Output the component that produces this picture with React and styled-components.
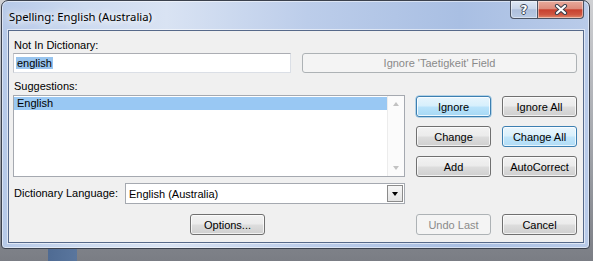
import React from 'react';
import styled, { createGlobalStyle, css } from 'styled-components';

const GlobalStyle = createGlobalStyle`
  html, body {
    margin: 0;
    padding: 0;
  }
  body {
    width: 593px;
    height: 261px;
    overflow: hidden;
    background:
      linear-gradient(to right, transparent 48px, #4f6b93 48px, #5a769d 77px, transparent 77px),
      linear-gradient(#cfd0d3, #a3a6ac 55%, #7a7d84);
    font-family: 'Liberation Sans', Arial, sans-serif;
  }
`;

const Window = styled.div`
  box-sizing: border-box;
  margin-left: 1px;
  width: 589px;
  height: 249px;
  border: 1px solid #3b414d;
  border-radius: 7px 7px 4px 4px;
  background: linear-gradient(to right, #b6c9e8 0%, #cddbf0 14%, #d9e3f3 28%, #bccdea 52%, #a9bfe3 78%, #b9cbe9 100%);
  box-shadow: inset 0 0 0 1px rgba(255, 255, 255, 0.5);
  padding: 0 5px 5px 6px;
  display: flex;
  flex-direction: column;
`;

const TitleBar = styled.div`
  height: 29px;
  display: flex;
  justify-content: space-between;
  align-items: flex-start;
`;

const Title = styled.div`
  padding: 7px 0 0 1px;
  font-family: 'Noto Sans', 'Liberation Sans', sans-serif;
  font-size: 11.3px;
  line-height: 17px;
  color: #000;
  text-shadow: 0 0 6px #fff, 0 0 10px #fff, 0 0 14px rgba(255, 255, 255, 0.9);
`;

const Caption = styled.div`
  display: flex;
`;

const CaptionButton = styled.div`
  box-sizing: border-box;
  height: 18px;
  width: ${p => p.$w}px;
  border: 1px solid #4b5363;
  border-top: none;
  display: flex;
  align-items: center;
  justify-content: center;
  box-shadow: inset 0 0 0 1px rgba(255, 255, 255, 0.45);
  ${p => p.$close ? css`
    border-radius: 0 0 4px 0;
    border-left: none;
    background: linear-gradient(#e8aa9c 0%, #dd8c7c 45%, #c8412f 52%, #cf5641 80%, #e08a6c 100%);
  ` : css`
    border-radius: 0 0 0 4px;
    background: linear-gradient(#dfe8f5 0%, #c9d6ea 45%, #aebfdc 52%, #b9cae4 100%);
  `}
`;

const HelpGlyph = styled.span`
  font-family: 'DejaVu Sans', sans-serif;
  font-weight: bold;
  font-size: 12px;
  line-height: 12px;
  color: #fff;
  text-shadow: -1px 0 #3d4658, 1px 0 #3d4658, 0 -1px #3d4658, 0 1px #3d4658;
`;

const Client = styled.div`
  flex: 1;
  box-sizing: border-box;
  background: #f0f0f0;
  border: 1px solid #56698a;
  box-shadow: 0 0 0 1px rgba(255, 255, 255, 0.55);
  padding: 6px 6px 0 4px;
  display: flex;
  flex-direction: column;
  font-family: 'Liberation Sans', Arial, sans-serif;
  font-size: 11px;
  color: #000;
`;

const Label = styled.div`
  height: ${p => p.$h || 16}px;
  line-height: ${p => p.$h || 16}px;
  padding-left: 1px;
  margin-top: ${p => p.$mt || 0}px;
`;

const Row = styled.div`
  display: flex;
  gap: ${p => p.$gap ?? 11}px;
  margin-top: ${p => p.$mt || 0}px;
`;

const TextBox = styled.div`
  box-sizing: border-box;
  width: 278px;
  height: 20px;
  background: #fff;
  border: 1px solid #dbdfe6;
  border-top-color: #abadb3;
  border-left-color: #c4c7cd;
  padding: 2px 0 0 2px;
  line-height: 14px;
`;

const Selection = styled.span`
  background: #98c4ee;
  padding: 0 1px;
`;

const Button = styled.button`
  box-sizing: border-box;
  width: ${p => p.$w || 75}px;
  height: ${p => p.$h || 21}px;
  padding: 0;
  border: 1px solid #707070;
  border-radius: 3px;
  background: linear-gradient(#f2f2f2 0%, #ebebeb 48%, #dddddd 52%, #cfcfcf 100%);
  box-shadow: inset 0 0 0 1px rgba(255, 255, 255, 0.7);
  font-family: 'Liberation Sans', Arial, sans-serif;
  font-size: 11px;
  color: #000;
  ${p => p.$variant === 'focus' && css`
    border-color: #3c7fb1;
    background: linear-gradient(#e7f5fd 0%, #d6effc 48%, #b9e3fb 52%, #a6d8f4 100%);
    box-shadow: inset 0 0 0 1px rgba(255, 255, 255, 0.8), 0 0 0 0.5px #78b6de;
  `}
  ${p => p.$variant === 'hot' && css`
    border-color: #3c7fb1;
    background: linear-gradient(#eaf6fd 0%, #d9f0fc 48%, #c2e6fb 52%, #b0dcf6 100%);
  `}
  ${p => p.disabled && css`
    border-color: #adb2b5;
    background: #f4f4f4;
    box-shadow: none;
    color: #8a8a8a;
  `}
`;

const ListBox = styled.div`
  box-sizing: border-box;
  width: 392px;
  height: 82px;
  background: #fff;
  border: 1px solid #a5a9b0;
  display: flex;
`;

const ListItems = styled.div`
  flex: 1;
  padding-top: 1px;
`;

const ListItem = styled.div`
  height: 13px;
  line-height: 13px;
  padding-left: 3px;
  background: ${p => p.$selected ? '#99c8f3' : 'transparent'};
`;

const ScrollBar = styled.div`
  width: 16px;
  border-left: 1px solid #ececec;
  background: #fbfbfb;
  display: flex;
  flex-direction: column;
  justify-content: space-between;
  align-items: center;
  padding: 6px 0;
`;

const Arrow = styled.div`
  width: 0;
  height: 0;
  border-left: 3.5px solid transparent;
  border-right: 3.5px solid transparent;
  ${p => p.$down
    ? css`border-top: 4px solid ${p.$color || '#c2c2c2'};`
    : css`border-bottom: 4px solid ${p.$color || '#c2c2c2'};`}
`;

const ButtonGrid = styled.div`
  display: grid;
  grid-template-columns: 75px 75px;
  grid-auto-rows: 21px;
  column-gap: 11px;
  row-gap: 9px;
  padding-top: 1px;
  align-content: start;
`;

const ComboLabel = styled.div`
  width: 111px;
  padding-left: 1px;
  line-height: 21px;
`;

const Combo = styled.div`
  box-sizing: border-box;
  width: 280px;
  height: 21px;
  background: #fff;
  border: 1px solid #a5a9b0;
  display: flex;
  align-items: center;
  justify-content: space-between;
  padding-left: 3px;
`;

const DropButton = styled.div`
  box-sizing: border-box;
  width: 16px;
  height: 17px;
  margin-right: 1px;
  border: 1px solid #8b8b8b;
  background: linear-gradient(#f6f6f6, #e4e4e4);
  display: flex;
  align-items: center;
  justify-content: center;
`;

const LeftArea = styled.div`
  width: 392px;
  padding-left: 177px;
  box-sizing: border-box;
`;

function CloseGlyph() {
  return (
    <svg width="14" height="11" viewBox="0 0 14 11">
      <path d="M3 2 L11 9 M11 2 L3 9" stroke="#3a3f4c" strokeWidth="4.2" strokeLinecap="round" />
      <path d="M3 2 L11 9 M11 2 L3 9" stroke="#fff" strokeWidth="2.2" strokeLinecap="round" />
    </svg>
  );
}

export default function App() {
  return (
    <>
      <GlobalStyle />
      <Window>
        <TitleBar>
          <Title>Spelling: English (Australia)</Title>
          <Caption>
            <CaptionButton $w={28}><HelpGlyph>?</HelpGlyph></CaptionButton>
            <CaptionButton $w={46} $close><CloseGlyph /></CaptionButton>
          </Caption>
        </TitleBar>
        <Client>
          <Label>Not In Dictionary:</Label>
          <Row>
            <TextBox><Selection>english</Selection></TextBox>
            <Button $w={275} $h={20} disabled>Ignore 'Taetigkeit' Field</Button>
          </Row>
          <Label $mt={5} $h={17}>Suggestions:</Label>
          <Row>
            <ListBox>
              <ListItems>
                <ListItem $selected>English</ListItem>
              </ListItems>
              <ScrollBar>
                <Arrow />
                <Arrow $down />
              </ScrollBar>
            </ListBox>
            <ButtonGrid>
              <Button $variant="focus">Ignore</Button>
              <Button>Ignore All</Button>
              <Button>Change</Button>
              <Button $variant="hot">Change All</Button>
              <Button>Add</Button>
              <Button>AutoCorrect</Button>
            </ButtonGrid>
          </Row>
          <Row $mt={6} $gap={0}>
            <ComboLabel>Dictionary Language:</ComboLabel>
            <Combo>
              <span>English (Australia)</span>
              <DropButton><Arrow $down $color="#000" /></DropButton>
            </Combo>
          </Row>
          <Row $mt={10}>
            <LeftArea>
              <Button>Options...</Button>
            </LeftArea>
            <Button disabled>Undo Last</Button>
            <Button>Cancel</Button>
          </Row>
        </Client>
      </Window>
    </>
  );
}
